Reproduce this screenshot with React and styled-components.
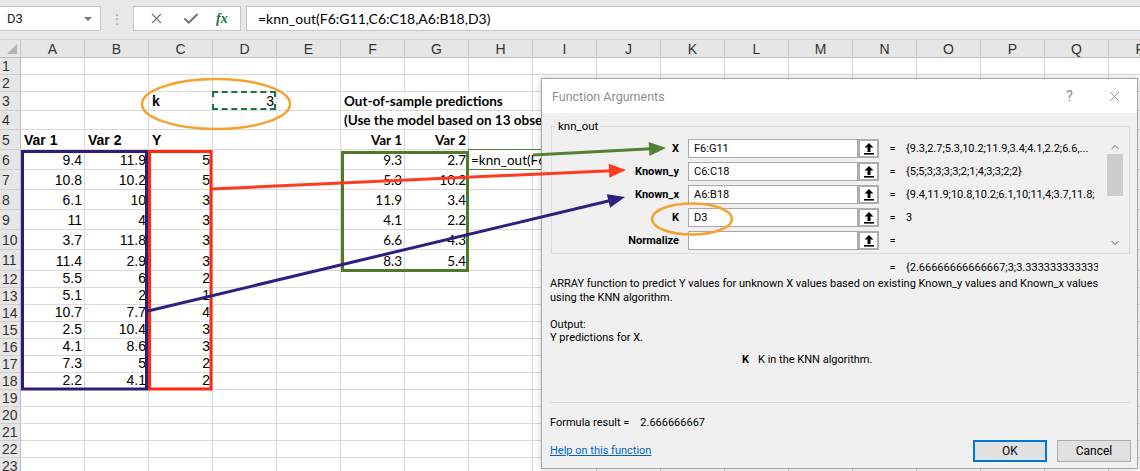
import React from 'react';
import styled, { createGlobalStyle } from 'styled-components';
import { X, Check, ChevronUp, ChevronDown } from 'lucide-react';

const GlobalStyle = createGlobalStyle`
  html, body { margin: 0; padding: 0; background: #fff; overflow: hidden; }
  body { font-family: "Liberation Sans", Arial, sans-serif; }
`;

const ARIAL = '"Liberation Sans", Arial, sans-serif';
const CALIBRI = 'Lato, "Liberation Sans", sans-serif';
const UI = 'Roboto, "Noto Sans", sans-serif';

// sheet geometry
const COLS = 'ABCDEFGHIJKLMNOPQR'.split('');
const ROW_H = [17, 17, 19, 19, 20, 20, 20, 20, 20, 20, 21, 17, 17, 17, 17, 17, 17, 17, 17, 17, 17, 17, 17];

const colA = [9.4, 10.8, 6.1, 11, 3.7, 11.4, 5.5, 5.1, 10.7, 2.5, 4.1, 7.3, 2.2];
const colB = [11.9, 10.2, 10, 4, 11.8, 2.9, 6, 2, 7.7, 10.4, 8.6, 5, 4.1];
const colC = [5, 5, 3, 3, 3, 3, 2, 1, 4, 3, 3, 2, 2];
const colF = [9.3, 5.3, 11.9, 4.1, 6.6, 8.3];
const colG = [2.7, 10.2, 3.4, 2.2, 4.3, 5.4];

const cells = {};
const put = (ref, v, opts = {}) => { cells[ref] = { v: String(v), ...opts }; };
put('C3', 'k', { bold: true });
put('D3', 3, { right: true, marquee: true });
put('F3', 'Out-of-sample predictions', { bold: true, calibri: true, spill: true });
put('F4', '(Use the model based on 13 observations)', { bold: true, calibri: true, spill: true });
put('A5', 'Var 1', { bold: true });
put('B5', 'Var 2', { bold: true });
put('C5', 'Y', { bold: true });
put('F5', 'Var 1', { bold: true, calibri: true, right: true });
put('G5', 'Var 2', { bold: true, calibri: true, right: true });
colA.forEach((v, i) => put('A' + (6 + i), v, { right: true }));
colB.forEach((v, i) => put('B' + (6 + i), v, { right: true }));
colC.forEach((v, i) => put('C' + (6 + i), v, { right: true }));
colF.forEach((v, i) => put('F' + (6 + i), v, { right: true, calibri: true }));
colG.forEach((v, i) => put('G' + (6 + i), v, { right: true, calibri: true }));
put('H6', '=knn_out(F6:G11,C6:C18,A6:B18,D3)', { calibri: true, editing: true });

const args = [
  { name: 'X', ref: 'F6:G11', value: '{9.3,2.7;5.3,10.2;11.9,3.4;4.1,2.2;6.6,...' },
  { name: 'Known_y', ref: 'C6:C18', value: '{5;5;3;3;3;3;2;1;4;3;3;2;2}' },
  { name: 'Known_x', ref: 'A6:B18', value: '{9.4,11.9;10.8,10.2;6.1,10;11,4;3.7,11.8;' },
  { name: 'K', ref: 'D3', value: '3' },
  { name: 'Normalize', ref: '', value: '' },
];

const Page = styled.div`
  position: relative;
  width: 1140px;
  height: 471px;
  overflow: hidden;
  background: #fff;
`;

/* ---------- formula bar ---------- */
const FormulaBar = styled.div`
  height: 40px;
  box-sizing: border-box;
  background: #e8e8e8;
  border-bottom: 1px solid #d4d4d4;
  display: flex;
  align-items: flex-start;
  padding-top: 6px;
`;

const NameBox = styled.div`
  width: 101px;
  height: 25px;
  box-sizing: border-box;
  background: #fff;
  border: 1px solid #c6c6c6;
  border-left: none;
  display: flex;
  align-items: center;
  justify-content: space-between;
  padding: 0 8px 0 7px;
  font: 13px ${UI};
  color: #222;
`;

const DropArrow = styled.span`
  width: 0;
  height: 0;
  border-left: 4px solid transparent;
  border-right: 4px solid transparent;
  border-top: 4px solid #777;
`;

const Grip = styled.div`
  width: 32px;
  height: 25px;
  display: flex;
  align-items: center;
  justify-content: center;
  color: #a8a8a8;
  font: 14px ${ARIAL};
`;

const FxButtons = styled.div`
  width: 108px;
  height: 25px;
  box-sizing: border-box;
  background: #fff;
  border: 1px solid #c6c6c6;
  display: flex;
  align-items: center;
  justify-content: space-around;
  padding: 0 4px 0 6px;
  color: #737373;
`;

const FxLabel = styled.span`
  font: italic bold 14px "Liberation Serif", serif;
  color: #217346;
`;

const FormulaInput = styled.div`
  flex: 1;
  margin-left: 5px;
  height: 25px;
  box-sizing: border-box;
  background: #fff;
  border: 1px solid #c6c6c6;
  border-right: none;
  display: flex;
  align-items: center;
  padding-left: 11px;
  font: 14px ${CALIBRI};
  color: #000;
`;

/* ---------- sheet ---------- */
const Sheet = styled.div`
  display: grid;
  grid-template-columns: 21px repeat(${COLS.length}, 64px);
  grid-template-rows: 18px ${ROW_H.map((h) => h + 'px').join(' ')};
`;

const Corner = styled.div`
  position: relative;
  background: #e6e6e6;
  border-right: 1px solid #c4c4c4;
  border-bottom: 1px solid #bdbdbd;
  &::after {
    content: '';
    position: absolute;
    right: 3px;
    bottom: 3px;
    border-left: 10px solid transparent;
    border-bottom: 10px solid #b4b4b4;
  }
`;

const ColHead = styled.div`
  background: #e6e6e6;
  border-right: 1px solid #c8c8c8;
  border-bottom: 1px solid #bdbdbd;
  display: flex;
  align-items: center;
  justify-content: center;
  font: 14px ${ARIAL};
  color: #333;
`;

const RowHead = styled.div`
  background: #e6e6e6;
  border-right: 1px solid #bdbdbd;
  border-bottom: 1px solid #cfcfcf;
  display: flex;
  align-items: center;
  padding-left: 2px;
  font: 14px ${ARIAL};
  color: #333;
`;

const Cell = styled.div`
  position: relative;
  box-sizing: border-box;
  min-width: 0;
  border-right: 1px solid #d9d9d9;
  border-bottom: 1px solid #d9d9d9;
  display: flex;
  align-items: flex-end;
  justify-content: ${(p) => (p.$right ? 'flex-end' : 'flex-start')};
  padding: 0 2px 1px 3px;
  font-family: ${(p) => (p.$calibri ? CALIBRI : ARIAL)};
  font-size: ${(p) => (p.$calibri ? '13.5px' : '14px')};
  font-weight: ${(p) => (p.$bold ? 700 : 400)};
  line-height: 16px;
  white-space: nowrap;
  color: #000;
  ${(p) =>
    p.$marquee &&
    `
    &::after {
      content: '';
      position: absolute;
      inset: -1px 0 0 -1px;
      border: 2px dashed #217346;
    }
  `}
`;

const Spill = styled.span`
  position: relative;
  z-index: 1;
  background: #fff;
  padding-right: 2px;
`;

const EditBox = styled.span`
  position: absolute;
  left: -1px;
  top: -1px;
  bottom: -1px;
  z-index: 2;
  display: flex;
  align-items: center;
  padding: 0 12px 0 2px;
  background: #fff;
  border: 1px solid #548235;
`;

/* ---------- dialog ---------- */
const Dialog = styled.div`
  position: absolute;
  left: 541px;
  top: 78px;
  width: 597px;
  height: 391px;
  box-sizing: border-box;
  z-index: 5;
  background: #f0f0f0;
  border: 1px solid #a6a6a6;
  box-shadow: 0 0 7px rgba(0, 0, 0, 0.2);
  display: flex;
  flex-direction: column;
  font-family: ${UI};
  font-size: 11px;
  color: #000;
`;

const TitleBar = styled.div`
  height: 34px;
  flex-shrink: 0;
  background: #fff;
  display: flex;
  align-items: center;
  padding-left: 10px;
  font-size: 12.5px;
  color: #8e8e8e;
`;

const TitleText = styled.span`
  flex: 1;
`;

const TitleButton = styled.span`
  width: 45px;
  height: 34px;
  display: flex;
  align-items: center;
  justify-content: center;
  color: #8a8a8a;
  font-size: 14px;
`;

const Body = styled.div`
  flex: 1;
  display: flex;
  flex-direction: column;
  padding: 0 7px 0 8px;
`;

const GroupBox = styled.div`
  margin: 13px 0 0 1px;
  height: 128px;
  box-sizing: border-box;
  border: 1px solid #dcdcdc;
  display: flex;
  flex-direction: column;
`;

const Legend = styled.span`
  align-self: flex-start;
  margin: -8px 0 0 4px;
  padding: 0 2px;
  line-height: 14px;
  font-size: 11.5px;
  background: #f0f0f0;
`;

const GroupContent = styled.div`
  display: flex;
  margin-top: 6px;
`;

const ArgList = styled.div`
  flex: 1;
  min-width: 0;
  display: flex;
  flex-direction: column;
  gap: 4px;
`;

const ArgRow = styled.div`
  display: grid;
  grid-template-columns: 136px 170px 21px 27px 1fr;
  height: 19px;
  align-items: center;
`;

const ArgLabel = styled.span`
  text-align: right;
  padding-right: 9px;
  font-weight: 700;
`;

const RefInput = styled.span`
  height: 19px;
  box-sizing: border-box;
  background: #fff;
  border: 1px solid #a9a9a9;
  display: flex;
  align-items: center;
  padding-left: 5px;
`;

const RefButton = styled.span`
  height: 19px;
  box-sizing: border-box;
  background: #fff;
  border: 2px solid #adadad;
  display: flex;
  align-items: center;
  justify-content: center;
`;

const Eq = styled.span`
  text-align: center;
`;

const ArgValue = styled.span`
  white-space: nowrap;
  overflow: hidden;
`;

const Scrollbar = styled.div`
  width: 16px;
  height: 111px;
  margin: 0 6px 0 7px;
  display: flex;
  flex-direction: column;
  color: #606060;
`;

const ScrollArrow = styled.div`
  height: 15px;
  display: flex;
  align-items: center;
  justify-content: center;
`;

const ScrollThumb = styled.div`
  height: 42px;
  background: #cdcdcd;
`;

const ScrollSpace = styled.div`
  flex: 1;
`;

const ResultRow = styled.div`
  display: grid;
  grid-template-columns: 27px 192px;
  margin: 5px 0 0 329px;
  height: 16px;
  align-items: center;
`;

const Description = styled.div`
  margin-top: 2px;
  line-height: 13.5px;
`;

const HelpArg = styled.div`
  display: grid;
  grid-template-columns: 199px 1fr;
  column-gap: 9px;
  margin-top: 8px;
  line-height: 13.5px;
`;

const HelpArgName = styled.span`
  text-align: right;
  font-weight: 700;
`;

const Separator = styled.div`
  margin-top: 36px;
  border-top: 1px solid #dadada;
`;

const FormulaResult = styled.div`
  margin-top: 13px;
  line-height: 13.5px;
  display: flex;
  gap: 11px;
`;

const Footer = styled.div`
  margin-top: 10px;
  display: flex;
  align-items: center;
  gap: 10px;
`;

const HelpLink = styled.span`
  flex: 1;
  color: #0066cc;
  text-decoration: underline;
`;

const Button = styled.span`
  width: 74px;
  height: 22px;
  box-sizing: border-box;
  background: #e1e1e1;
  border: ${(p) => (p.$default ? '2px solid #0078d7' : '1px solid #adadad')};
  display: flex;
  align-items: center;
  justify-content: center;
  font-size: 12px;
  margin-right: ${(p) => (p.$last ? '-1px' : '0')};
`;

/* ---------- annotations ---------- */
const Overlay = styled.svg`
  position: absolute;
  left: 0;
  top: 0;
  z-index: 10;
  pointer-events: none;
`;

const arrowParts = (x1, y1, x2, y2, len = 17, half = 7) => {
  const dx = x2 - x1;
  const dy = y2 - y1;
  const d = Math.hypot(dx, dy);
  const ux = dx / d;
  const uy = dy / d;
  const bx = x2 - ux * len;
  const by = y2 - uy * len;
  return {
    line: { x1, y1, x2: bx + ux * 2, y2: by + uy * 2 },
    head: `${x2},${y2} ${bx - uy * half},${by + ux * half} ${bx + uy * half},${by - ux * half}`,
  };
};

const Arrow = ({ from, to, color }) => {
  const a = arrowParts(from[0], from[1], to[0], to[1]);
  return (
    <g>
      <line {...a.line} stroke={color} strokeWidth="3" />
      <polygon points={a.head} fill={color} />
    </g>
  );
};

const RefIcon = () => (
  <svg width="12" height="13" viewBox="0 0 12 13">
    <path d="M6 1 L10.5 5.5 H7.5 V10 H4.5 V5.5 H1.5 Z" fill="#000" />
    <rect x="1" y="11" width="10" height="1.6" fill="#000" />
  </svg>
);

const renderCell = (col, row) => {
  const ref = col + row;
  const c = cells[ref];
  if (!c) return <Cell key={ref} />;
  let content = c.v;
  if (c.spill) content = <Spill>{c.v}</Spill>;
  if (c.editing) content = <EditBox>{c.v}</EditBox>;
  return (
    <Cell key={ref} $right={c.right} $bold={c.bold} $calibri={c.calibri} $marquee={c.marquee}>
      {content}
    </Cell>
  );
};

export default function App() {
  return (
    <Page>
      <GlobalStyle />
      <FormulaBar>
        <NameBox>
          D3
          <DropArrow />
        </NameBox>
        <Grip>⋮</Grip>
        <FxButtons>
          <X size={17} strokeWidth={1.6} />
          <Check size={18} strokeWidth={2.6} />
          <FxLabel>fx</FxLabel>
        </FxButtons>
        <FormulaInput>=knn_out(F6:G11,C6:C18,A6:B18,D3)</FormulaInput>
      </FormulaBar>

      <Sheet>
        <Corner />
        {COLS.map((c) => (
          <ColHead key={c}>{c}</ColHead>
        ))}
        {ROW_H.map((_, i) => (
          <React.Fragment key={i}>
            <RowHead>{i + 1}</RowHead>
            {COLS.map((c) => renderCell(c, i + 1))}
          </React.Fragment>
        ))}
      </Sheet>

      <Dialog>
        <TitleBar>
          <TitleText>Function Arguments</TitleText>
          <TitleButton>?</TitleButton>
          <TitleButton>
            <X size={17} strokeWidth={1.2} />
          </TitleButton>
        </TitleBar>
        <Body>
          <GroupBox>
            <Legend>knn_out</Legend>
            <GroupContent>
              <ArgList>
                {args.map((a) => (
                  <ArgRow key={a.name}>
                    <ArgLabel>{a.name}</ArgLabel>
                    <RefInput>{a.ref}</RefInput>
                    <RefButton>
                      <RefIcon />
                    </RefButton>
                    <Eq>=</Eq>
                    <ArgValue>{a.value}</ArgValue>
                  </ArgRow>
                ))}
              </ArgList>
              <Scrollbar>
                <ScrollArrow>
                  <ChevronUp size={12} strokeWidth={2} />
                </ScrollArrow>
                <ScrollThumb />
                <ScrollSpace />
                <ScrollArrow>
                  <ChevronDown size={12} strokeWidth={2} />
                </ScrollArrow>
              </Scrollbar>
            </GroupContent>
          </GroupBox>

          <ResultRow>
            <Eq>=</Eq>
            <ArgValue>{'{2.66666666666667;3;3.33333333333333'}</ArgValue>
          </ResultRow>

          <Description>
            ARRAY function to predict Y values for unknown X values based on existing Known_y values and Known_x values
            <br />
            using the KNN algorithm.
            <br />
            <br />
            Output:
            <br />
            Y predictions for X.
          </Description>

          <HelpArg>
            <HelpArgName>K</HelpArgName>
            <span>K in the KNN algorithm.</span>
          </HelpArg>

          <Separator />

          <FormulaResult>
            <span>Formula result =</span>
            <span>2.666666667</span>
          </FormulaResult>

          <Footer>
            <HelpLink>Help on this function</HelpLink>
            <Button $default>OK</Button>
            <Button $last>Cancel</Button>
          </Footer>
        </Body>
      </Dialog>

      <Overlay width="1140" height="471" viewBox="0 0 1140 471">
        <rect x="22.5" y="151.5" width="124" height="237.5" fill="none" stroke="#2e1c78" strokeWidth="3" />
        <rect x="149.5" y="151.5" width="61.5" height="237.5" fill="none" stroke="#ff2a10" strokeWidth="3" />
        <rect x="342.5" y="152.5" width="125" height="118" fill="none" stroke="#4f7a28" strokeWidth="3" />
        <ellipse cx="216" cy="104" rx="74" ry="25" fill="none" stroke="#f6a02d" strokeWidth="2.5" />
        <ellipse cx="692" cy="219" rx="40" ry="15.5" fill="none" stroke="#f6a02d" strokeWidth="2.5" />
        <Arrow from={[533, 155]} to={[666, 148]} color="#548235" />
        <Arrow from={[212, 189]} to={[626, 170]} color="#ff3b1f" />
        <Arrow from={[148, 311]} to={[625, 197]} color="#2f1f80" />
      </Overlay>
    </Page>
  );
}
